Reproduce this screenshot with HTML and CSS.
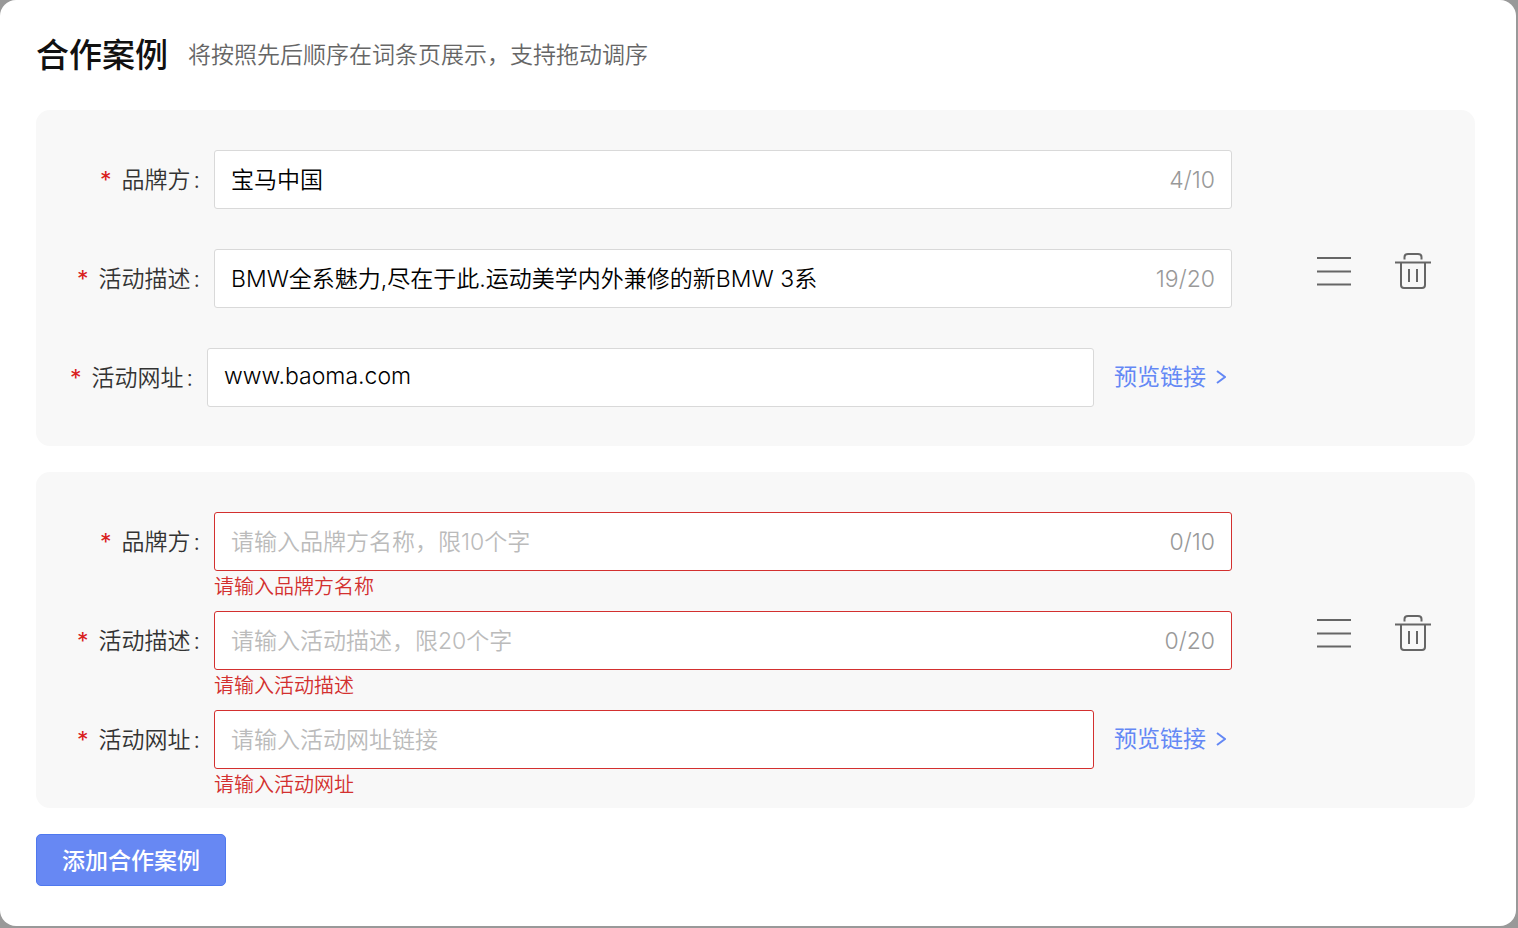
FILE: index.html
```html
<!DOCTYPE html>
<html lang="zh-CN">
<head>
<meta charset="utf-8">
<meta name="viewport" content="width=device-width, initial-scale=1">
<title>合作案例</title>
<link rel="stylesheet" href="styles.css">
</head>
<body>
<svg class="sprite" aria-hidden="true">
  <symbol id="icon-menu" viewBox="0 0 34 36">
    <path d="M0 4H34M0 17.500H34M0 30.500H34"/>
  </symbol>
  <symbol id="icon-trash" viewBox="0 0 36 38">
    <path d="M0 9.500H36M9.500 6.500V4Q9.500 1 13 1H23Q26.500 1 26.500 4V6.500M6 9.500V32Q6 35 9 35H27Q30 35 30 32V9.500M14 16V29M22 16V29"/>
  </symbol>
  <symbol id="icon-arrow" viewBox="0 0 10 14">
    <path d="M1 1L9 7L1 13"/>
  </symbol>
</svg>
<main class="panel">
  <header class="header">
    <h1 class="title">合作案例</h1>
    <p class="hint">将按照先后顺序在词条页展示，支持拖动调序</p>
  </header>

  <section class="case">
    <div class="fields">
      <div class="item">
        <label class="label" for="brand-1"><span class="star">*</span>品牌方<span class="colon">:</span></label>
        <div class="control">
          <div class="box"><input class="input" id="brand-1" type="text" value="宝马中国"><span class="count">4/10</span></div>
        </div>
      </div>
      <div class="item">
        <label class="label" for="desc-1"><span class="star">*</span>活动描述<span class="colon">:</span></label>
        <div class="control">
          <div class="box"><input class="input" id="desc-1" type="text" value="BMW全系魅力,尽在于此.运动美学内外兼修的新BMW 3系"><span class="count">19/20</span></div>
        </div>
      </div>
      <div class="item">
        <label class="label label-narrow" for="url-1"><span class="star">*</span>活动网址<span class="colon">:</span></label>
        <div class="control">
          <div class="box"><input class="input" id="url-1" type="text" value="www.baoma.com"></div>
        </div>
        <a class="preview" href="#">预览链接<svg class="arrow" aria-hidden="true"><use href="#icon-arrow"/></svg></a>
      </div>
    </div>
    <div class="actions">
      <button class="action" type="button" aria-label="拖动调序"><svg class="icon-menu"><use href="#icon-menu"/></svg></button>
      <button class="action" type="button" aria-label="删除"><svg class="icon-trash"><use href="#icon-trash"/></svg></button>
    </div>
  </section>

  <section class="case">
    <div class="fields">
      <div class="item">
        <label class="label" for="brand-2"><span class="star">*</span>品牌方<span class="colon">:</span></label>
        <div class="control">
          <div class="box box-error"><input class="input" id="brand-2" type="text" placeholder="请输入品牌方名称，限10个字" aria-describedby="brand-2-error"><span class="count">0/10</span></div>
          <p class="error" id="brand-2-error">请输入品牌方名称</p>
        </div>
      </div>
      <div class="item">
        <label class="label" for="desc-2"><span class="star">*</span>活动描述<span class="colon">:</span></label>
        <div class="control">
          <div class="box box-error"><input class="input" id="desc-2" type="text" placeholder="请输入活动描述，限20个字" aria-describedby="desc-2-error"><span class="count">0/20</span></div>
          <p class="error" id="desc-2-error">请输入活动描述</p>
        </div>
      </div>
      <div class="item">
        <label class="label" for="url-2"><span class="star">*</span>活动网址<span class="colon">:</span></label>
        <div class="control">
          <div class="box box-error"><input class="input" id="url-2" type="text" placeholder="请输入活动网址链接" aria-describedby="url-2-error"></div>
          <p class="error" id="url-2-error">请输入活动网址</p>
        </div>
        <a class="preview" href="#">预览链接<svg class="arrow" aria-hidden="true"><use href="#icon-arrow"/></svg></a>
      </div>
    </div>
    <div class="actions">
      <button class="action" type="button" aria-label="拖动调序"><svg class="icon-menu"><use href="#icon-menu"/></svg></button>
      <button class="action" type="button" aria-label="删除"><svg class="icon-trash"><use href="#icon-trash"/></svg></button>
    </div>
  </section>

  <button class="add" type="button">添加合作案例</button>
</main>
</body>
</html>
```
FILE: styles.css
```css
* {
  box-sizing: border-box;
}

body {
  margin: 0;
  padding: 0 2px 2px 0;
  min-height: 100vh;
  display: flex;
  background: #999;
  color: #333;
  font: 350 23px/32px Inter, "Noto Sans CJK SC", sans-serif;
}

.sprite {
  position: absolute;
  width: 0;
  height: 0;
}

.panel {
  flex: 1;
  min-width: 0;
  padding: 31px 41px 40px 36px;
  border-radius: 16px;
  background: #fff;
}

.header {
  display: flex;
  align-items: center;
  gap: 20px;
  margin-bottom: 31px;
}

.title {
  margin: 0;
  color: #111;
  font-size: 33px;
  line-height: 48px;
  font-weight: 500;
}

.hint {
  margin: 0;
  color: #666;
}

.case {
  display: flex;
  align-items: center;
  margin-bottom: 26px;
  padding: 40px 44px 0 0;
  border-radius: 14px;
  background: #f8f8f8;
}

.fields {
  flex: 1;
  min-width: 0;
}

.item {
  display: flex;
  min-height: 99px;
}

.item:last-child {
  min-height: 98px;
}

.label {
  width: 178px;
  padding-right: 14px;
  line-height: 60px;
  text-align: right;
  white-space: nowrap;
}

.label-narrow {
  width: 171px;
}

.star {
  margin-right: 10px;
  color: #d9201c;
  font-weight: 400;
}

.colon {
  margin-left: 3px;
}

.control {
  flex: 1;
  min-width: 0;
}

.box {
  display: flex;
  align-items: center;
  height: 59px;
  padding: 0 16px;
  border: 1px solid #d9d9d9;
  border-radius: 3px;
  background: #fff;
}

.box-error {
  border-color: #d3302f;
}

.input {
  flex: 1;
  min-width: 0;
  height: 100%;
  padding: 0;
  border: 0;
  outline: 0;
  background: transparent;
  color: #000;
  font: inherit;
}

.input:not(:placeholder-shown) {
  padding-bottom: 3px;
}

.input::placeholder {
  color: #bbb;
  opacity: 1;
}

.count {
  color: #999;
}

.error {
  margin: 0;
  color: #d3302f;
  font-size: 20px;
}

.preview {
  display: flex;
  align-items: center;
  gap: 10px;
  width: 118px;
  height: 58px;
  margin-left: 20px;
  color: #6488f5;
  font-weight: 400;
  text-decoration: none;
  white-space: nowrap;
}

.arrow {
  flex: none;
  width: 10px;
  height: 14px;
  fill: none;
  stroke: #6488f5;
  stroke-width: 2;
}

.actions {
  display: flex;
  gap: 44px;
  align-items: center;
  padding: 0 0 52px 85px;
}

.action {
  display: block;
  padding: 0;
  border: 0;
  background: none;
  cursor: pointer;
}

.action svg {
  display: block;
  fill: none;
  stroke: #666;
  stroke-width: 2;
}

.icon-menu {
  width: 34px;
  height: 36px;
}

.icon-trash {
  width: 36px;
  height: 38px;
}

.add {
  display: block;
  height: 52px;
  padding: 1px 25px 0;
  border: 1px solid #4f78ee;
  border-radius: 5px;
  background: #6788f3;
  color: #fff;
  font: inherit;
  font-weight: 500;
  cursor: pointer;
}
```
